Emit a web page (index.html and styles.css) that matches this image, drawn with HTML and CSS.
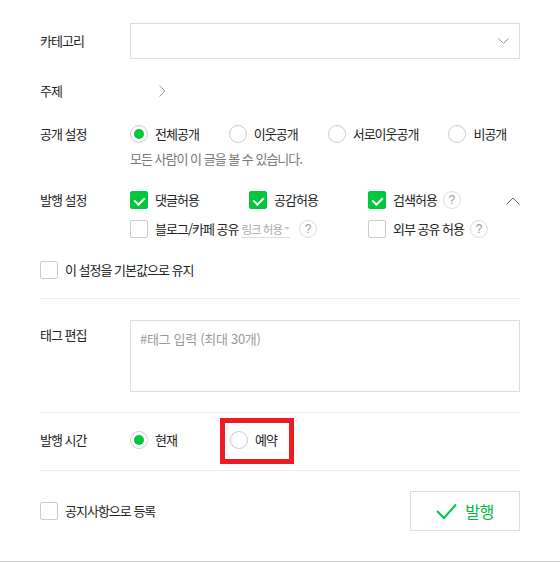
FILE: index.html
```html
<!DOCTYPE html>
<html lang="ko">
<head>
<meta charset="utf-8">
<title>발행 설정</title>
<link rel="stylesheet" href="styles.css">
</head>
<body>
<div class="form">
  <div class="row row-category">
    <div class="label">카테고리</div>
    <div class="select">
      <svg class="chev-down" width="11" height="7" viewBox="0 0 11 7"><path d="M0.5 0.5 L5.5 5.5 L10.5 0.5" fill="none" stroke="#999" stroke-width="1"/></svg>
    </div>
  </div>

  <div class="row row-topic">
    <div class="label">주제</div>
    <svg class="chev-right" width="7" height="12" viewBox="0 0 7 12"><path d="M0.5 0.5 L6 6 L0.5 11.5" fill="none" stroke="#999" stroke-width="1"/></svg>
  </div>

  <div class="row row-open">
    <div class="label">공개 설정</div>
    <div class="field">
      <div class="radios">
        <span class="opt"><span class="radio on"></span>전체공개</span>
        <span class="opt"><span class="radio"></span>이웃공개</span>
        <span class="opt"><span class="radio"></span>서로이웃공개</span>
        <span class="opt"><span class="radio"></span>비공개</span>
      </div>
      <p class="help-text">모든 사람이 이 글을 볼 수 있습니다.</p>
    </div>
  </div>

  <div class="row row-publish">
    <div class="label">발행 설정</div>
    <div class="checks">
      <span class="opt"><span class="check on"></span>댓글허용</span>
      <span class="opt"><span class="check on"></span>공감허용</span>
      <span class="opt"><span class="check on"></span>검색허용<span class="q">?</span></span>
      <span class="opt span2"><span class="check"></span>블로그/카페 공유<span class="link">링크 허용<span class="tri"></span></span><span class="q q-link">?</span></span>
      <span class="opt"><span class="check"></span>외부 공유 허용<span class="q">?</span></span>
    </div>
    <svg class="chev-up" width="14" height="8" viewBox="0 0 14 8"><path d="M0.5 7.5 L7 1 L13.5 7.5" fill="none" stroke="#666" stroke-width="1"/></svg>
  </div>

  <div class="row row-default">
    <span class="opt"><span class="check"></span>이 설정을 기본값으로 유지</span>
  </div>

  <div class="divider div-1"></div>

  <div class="row row-tag">
    <div class="label">태그 편집</div>
    <div class="tag-box">#태그 입력 (최대 30개)</div>
  </div>

  <div class="divider div-2"></div>

  <div class="row row-time">
    <div class="label">발행 시간</div>
    <div class="time-opts">
      <span class="opt"><span class="radio on"></span>현재</span>
      <span class="opt reserve"><span class="radio"></span>예약<span class="highlight"></span></span>
    </div>
  </div>

  <div class="divider div-3"></div>

  <div class="row row-footer">
    <span class="opt"><span class="check"></span>공지사항으로 등록</span>
    <button class="publish-btn">
      <svg width="21" height="16" viewBox="0 0 21 16"><path d="M1 8 L8 15 L20 1.5" fill="none" stroke="#00c73c" stroke-width="2"/></svg>
      <span>발행</span>
    </button>
  </div>
</div>
<div class="bottom-line"></div>
</body>
</html>
```

FILE: styles.css
```css
* { box-sizing: border-box; }

body {
  margin: 0;
  background: #fff;
  color: #222;
  font-family: "Noto Sans CJK KR", "Noto Sans", sans-serif;
  font-size: 13px;
  letter-spacing: -1px;
  line-height: 18px;
}

.form {
  padding: 0 40px;
  width: 560px;
}

.row {
  display: flex;
  align-items: center;
}

.label {
  width: 90px;
  flex: none;
}

/* category */
.row-category { margin-top: 23px; }
.select {
  flex: 1;
  height: 36px;
  border: 1px solid #ddd;
  display: flex;
  align-items: center;
  justify-content: flex-end;
  padding-right: 10px;
}

/* topic */
.row-topic { margin-top: 22px; height: 20px; }
.chev-right { margin-left: 29px; }

/* open settings */
.row-open { margin-top: 24px; align-items: flex-start; }
.radios { display: flex; gap: 30px; }
.opt {
  display: inline-flex;
  align-items: center;
  height: 18px;
  white-space: nowrap;
  position: relative;
}
.radio {
  width: 18px;
  height: 18px;
  border: 1px solid #ccc;
  border-radius: 50%;
  margin-right: 7px;
  display: inline-flex;
  align-items: center;
  justify-content: center;
  flex: none;
}
.radio.on::after {
  content: "";
  width: 10px;
  height: 10px;
  border-radius: 50%;
  background: #00c73c;
}
.help-text {
  margin: 7px 0 0;
  color: #777;
}

/* publish settings */
.row-publish { margin-top: 23px; align-items: flex-start; }
.checks {
  display: grid;
  grid-template-columns: 119px 119px auto;
  row-gap: 11px;
}
.span2 { grid-column: span 2; }
.check {
  width: 18px;
  height: 18px;
  border: 1px solid #ccc;
  border-radius: 2px;
  margin-right: 7px;
  flex: none;
  position: relative;
}
.check.on {
  background: #00c73c;
  border-color: #00c73c;
}
.check.on::after {
  content: "";
  position: absolute;
  left: 5px;
  top: 3px;
  width: 5px;
  height: 8px;
  border-right: 2px solid #fff;
  border-bottom: 2px solid #fff;
  transform: rotate(45deg);
}
.q {
  width: 18px;
  height: 18px;
  border: 1px solid #ddd;
  border-radius: 50%;
  color: #999;
  font-size: 12px;
  letter-spacing: 0;
  display: inline-flex;
  align-items: center;
  justify-content: center;
  margin-left: 6px;
  font-family: "Liberation Sans", sans-serif;
}
.q-link { margin-left: 9px; }
.link {
  color: #aaa;
  font-size: 11.5px;
  margin-left: 3px;
  border-bottom: 1px solid #ddd;
  line-height: 16px;
  display: inline-flex;
  align-items: center;
}
.tri {
  width: 0;
  height: 0;
  border-left: 3px solid transparent;
  border-right: 3px solid transparent;
  border-top: 3px solid #ccc;
  margin-left: 2px;
}
.chev-up { margin-left: auto; margin-top: 6px; }

/* default */
.row-default { margin-top: 23px; }

.divider {
  height: 1px;
  background: #eee;
}
.div-1 { margin-top: 19px; }
.div-2 { margin-top: 20px; }
.div-3 { margin-top: 21px; }

/* tag */
.row-tag { margin-top: 21px; align-items: flex-start; }
.row-tag .label { margin-top: 6px; }
.tag-box {
  flex: 1;
  height: 72px;
  border: 1px solid #ddd;
  padding: 9px 9px;
  color: #999;
  letter-spacing: -0.3px;
}

/* time */
.row-time { margin-top: 18px; }
.time-opts {
  display: grid;
  grid-template-columns: 100px auto;
}
.highlight {
  position: absolute;
  left: -10px;
  top: -13px;
  width: 74px;
  height: 46px;
  border: 5px solid #ed1c24;
}

/* footer */
.row-footer {
  margin-top: 20px;
  justify-content: space-between;
}
.publish-btn {
  width: 110px;
  height: 40px;
  border: 1px solid #ddd;
  background: #fff;
  display: flex;
  align-items: center;
  justify-content: center;
  gap: 8px;
  color: #00b843;
  font-family: inherit;
  font-size: 16px;
  letter-spacing: -0.5px;
  padding: 0;
}

.bottom-line {
  margin-top: 30px;
  height: 1px;
  background: #ccc;
}
```
